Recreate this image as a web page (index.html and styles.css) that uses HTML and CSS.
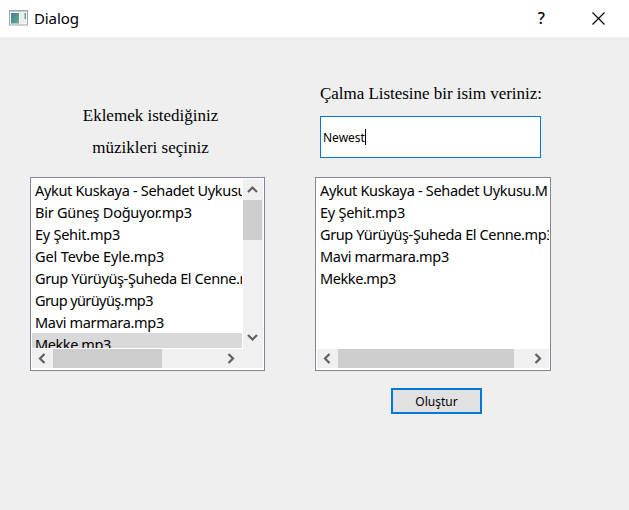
FILE: index.html
```html
<!DOCTYPE html>
<html lang="tr">
<head>
<meta charset="utf-8">
<title>Dialog</title>
<link rel="stylesheet" href="styles.css">
</head>
<body>
<div class="window">
  <header class="titlebar">
    <svg class="app-icon" width="19" height="16" viewBox="0 0 19 16">
      <defs><linearGradient id="pane" x1="0" y1="0" x2="1" y2="1"><stop offset="0" stop-color="#4579a2"/><stop offset="1" stop-color="#62b484"/></linearGradient></defs>
      <rect x=".5" y=".5" width="18" height="14.5" fill="#f6f7f8" stroke="#a2a8ae"/>
      <path d="M1 1.5h17" stroke="#c5cbd0"/>
      <rect x="2" y="3" width="8" height="10.5" fill="url(#pane)"/>
      <path d="M11 3h6v10.500h-6z" fill="#e9eef1"/>
      <path d="M16.300 3v6" stroke="#58a88c" stroke-width="1.500"/>
    </svg>
    <h1 class="title">Dialog</h1>
    <span class="help">?</span>
    <svg class="close" width="13" height="13" viewBox="0 0 13 13"><path d="M.5.5l12 12M12.500.5l-12 12" stroke="#000" stroke-width="1.100"/></svg>
  </header>
  <main class="content">
    <section class="column">
      <div class="hint">Eklemek istediğiniz<br>müzikleri seçiniz</div>
      <div class="list list-source">
        <ul class="items">
          <li class="track-aykut">Aykut Kuskaya - Sehadet Uykusu</li>
          <li class="track-bir">Bir Güneş Doğuyor.mp3</li>
          <li class="track-ey">Ey Şehit.mp3</li>
          <li class="track-gel">Gel Tevbe Eyle.mp3</li>
          <li class="track-suheda">Grup Yürüyüş-Şuheda El Cenne.m</li>
          <li class="track-grup">Grup yürüyüş.mp3</li>
          <li class="track-mavi">Mavi marmara.mp3</li>
          <li class="track-mekke selected">Mekke.mp3</li>
        </ul>
        <div class="vbar">
          <svg width="19" height="21" viewBox="0 0 19 21"><path d="M5 13l4.500-4.500L14 13"/></svg>
          <div class="vthumb"></div>
          <svg class="down" width="19" height="21" viewBox="0 0 19 21"><path d="M5 8l4.500 4.500L14 8"/></svg>
        </div>
        <div class="hbar">
          <svg width="21" height="19" viewBox="0 0 21 19"><path d="M12.500 5L8 9.500l4.500 4.500"/></svg>
          <div class="hthumb"></div>
          <svg class="right" width="21" height="19" viewBox="0 0 21 19"><path d="M7.500 5L12 9.500 7.500 14"/></svg>
        </div>
      </div>
    </section>
    <section class="column">
      <label class="name-label" for="name">Çalma Listesine bir isim veriniz:</label>
      <div class="field" id="name"><span class="value">Newest</span><i class="caret"></i></div>
      <div class="list list-target">
        <ul class="items">
          <li class="track-aykut">Aykut Kuskaya - Sehadet Uykusu.M</li>
          <li class="track-ey">Ey Şehit.mp3</li>
          <li class="track-suheda">Grup Yürüyüş-Şuheda El Cenne.mp3</li>
          <li class="track-mavi">Mavi marmara.mp3</li>
          <li class="track-mekke">Mekke.mp3</li>
        </ul>
        <div class="hbar">
          <svg width="21" height="19" viewBox="0 0 21 19"><path d="M12.500 5L8 9.500l4.500 4.500"/></svg>
          <div class="hthumb"></div>
          <svg class="right" width="21" height="19" viewBox="0 0 21 19"><path d="M7.500 5L12 9.500 7.500 14"/></svg>
        </div>
      </div>
      <button class="create">Oluştur</button>
    </section>
  </main>
</div>
</body>
</html>
```

FILE: styles.css
```css
* { box-sizing: border-box; }
body { margin: 0; background: #efefef; color: #000; font-family: "Noto Sans", "Open Sans", sans-serif; overflow: hidden; }
.window { width: 629px; height: 510px; background: #efefef; }
.titlebar { height: 37px; background: #fff; display: flex; align-items: center; padding: 0 24px 0 9px; }
.app-icon { flex: none; margin-top: -2px; }
.title { margin: -2px 0 0 6px; font-size: 15px; font-weight: 400; line-height: 20px; letter-spacing: -.1px; flex: 1; }
.help { font-size: 16px; font-weight: 500; line-height: 20px; margin: -1px 47px 0 0; }
.close { flex: none; }
.content { display: grid; grid-template-columns: 235px 236px; column-gap: 50px; padding-left: 30px; align-items: start; }
.column { display: flex; flex-direction: column; }
.hint { height: 140px; padding: 63px 0 0 6px; text-align: center; font: 17px/32px "Liberation Serif", serif; white-space: nowrap; }
.name-label { height: 79px; padding: 47px 0 0 5px; font: 17px/20px "Liberation Serif", serif; letter-spacing: -.03px; white-space: nowrap; }
.field { width: 221px; height: 42px; margin: 0 0 19px 5px; border: 1px solid #0078d7; background: #fff; display: flex; align-items: center; padding-left: 2px; font-size: 12px; }
.caret { width: 1px; height: 16px; background: #000; }
.list { height: 194px; border: 1px solid #828790; background: #fff; padding: 1px; display: grid; grid-template-rows: 169px 19px; row-gap: 1px; }
.list-source { grid-template-columns: 210px 20px; column-gap: 1px; }
.list-target { grid-template-columns: 232px; }
.items { list-style: none; margin: 0; padding: 0; overflow: hidden; font-size: 14.500px; line-height: 22px; white-space: nowrap; }
.items li { height: 22px; padding-left: 3px; }
.items .selected { background: #d9d9d9; }
.track-aykut { letter-spacing: -.32px; }
.track-bir { letter-spacing: -.25px; }
.track-ey { letter-spacing: -.25px; }
.track-gel { letter-spacing: -.13px; }
.track-suheda { letter-spacing: -.38px; }
.track-grup { letter-spacing: -.6px; }
.track-mavi { letter-spacing: -.32px; }
.track-mekke { letter-spacing: -.42px; }
.vbar, .hbar { background: #f0f0f0; }
.vbar { grid-column: 2; grid-row: 1 / 3; display: flex; flex-direction: column; padding-bottom: 20px; }
.vthumb { width: 19px; height: 40px; background: #cdcdcd; }
.down { margin-top: auto; }
.hbar { grid-row: 2; display: flex; }
.list-source .hbar { margin-right: -1px; padding-right: 1px; }
.hthumb { background: #cdcdcd; }
.list-source .hthumb { width: 109px; }
.list-target .hthumb { width: 176px; }
.right { margin-left: auto; }
.list svg { flex: none; fill: none; stroke: #606060; stroke-width: 2.200; }
.create { width: 91px; height: 26px; margin: 17px 0 0 76px; padding: 0; border: 2px solid #0078d7; background: #e1e1e1; color: #000; font: 12px/24px "Noto Sans", sans-serif; }
```
